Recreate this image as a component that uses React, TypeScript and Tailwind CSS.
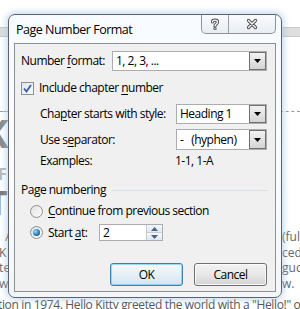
import React from 'react';

const font = { fontFamily: '"Open Sans", "Noto Sans", sans-serif' };

const Ul: React.FC<{ children: React.ReactNode }> = ({ children }) => (
  <span className="underline underline-offset-2">{children}</span>
);

const DropButton = () => (
  <div className="h-full w-[17px] border border-[#707070] bg-gradient-to-b from-[#f2f2f2] to-[#d4d4d4] flex items-center justify-center">
    <svg width="7" height="4" viewBox="0 0 7 4">
      <path d="M0 0h7L3.5 4z" fill="#000" />
    </svg>
  </div>
);

const Select: React.FC<{ value: string; className: string }> = ({ value, className }) => (
  <div className={`flex items-stretch border border-[#abadb3] bg-white ${className}`}>
    <div className="flex-1 pl-[3px] flex items-center whitespace-pre text-black">{value}</div>
    <DropButton />
  </div>
);

const CaptionGlyph: React.FC<{ d: string }> = ({ d }) => (
  <svg width="14" height="12" viewBox="0 0 14 12">
    <path d={d} fill="none" stroke="#4b4b4b" strokeWidth="3.2" strokeLinecap="round" strokeLinejoin="round" />
    <path d={d} fill="none" stroke="#ffffff" strokeWidth="1.4" strokeLinecap="round" strokeLinejoin="round" />
  </svg>
);

const Radio: React.FC<{ checked?: boolean }> = ({ checked }) => (
  <div className="w-[13px] h-[13px] rounded-full border border-[#8e8f8f] bg-gradient-to-br from-[#e4e4e4] to-[#fbfbfb] flex items-center justify-center">
    {checked && (
      <div className="w-[7px] h-[7px] rounded-full bg-[radial-gradient(circle_at_35%_35%,#9bdcff,#1a73b5_60%,#0b4b86)]" />
    )}
  </div>
);

export default function App() {
  return (
    <div className="relative w-[300px] h-[309px] overflow-hidden bg-white" style={font}>
      {/* document behind */}
      <div className="h-[27px]" />
      <div className="h-[10px] bg-[#dedede] border-y border-[#c9c9c9]" />
      <div className="h-[74px]" />
      <div className="flex justify-between h-[2px]">
        <div className="w-[10px] border-t border-dashed border-[#9a9a9a]" />
        <div className="w-[20px] border-t border-dashed border-[#9a9a9a]" />
      </div>
      <div className="h-[40px] text-[40px] font-bold leading-[40px] text-[#8a8a8a] ml-[-18px]">K</div>
      <div className="h-[18px] mt-[12px] text-[16px] font-bold leading-[18px] text-[#b8b8b8] ml-[-2px]">F</div>
      <div className="h-[30px] mt-[4px] text-[34px] font-bold leading-[30px] text-[#7a7a7a] ml-[-12px]">T</div>
      <div className="flex justify-between text-[12px] leading-[15.5px] text-[#666] whitespace-nowrap mt-[12px]">
        <div className="flex flex-col ml-[-4px]">
          <span className="text-[#c0392b]">&nbsp;&nbsp;&nbsp;A</span>
          <span>&nbsp;K</span>
          <span>&nbsp;te</span>
          <span>&nbsp;w</span>
        </div>
        <div className="flex flex-col w-[18px] overflow-hidden">
          <span>(ful</span>
          <span>ced</span>
          <span>guch</span>
          <span>w.</span>
        </div>
      </div>
      <div className="absolute left-[-2px] top-[296px] whitespace-nowrap text-[12px] tracking-[-0.35px] text-[#555]">
        tion in 1974. Hello Kitty greeted the world with a "Hello!" on l
      </div>

      {/* dialog window */}
      <div className="absolute left-[8px] top-[14px] w-[274px] h-[284px] rounded-[7px] border border-[#5f6368] bg-gradient-to-b from-[#f7fbff] via-[#fbfcfd] to-[#f3f6f9] shadow-[0_0_6px_2px_rgba(150,190,230,0.55)] flex flex-col tracking-[-0.5px] whitespace-nowrap">
        <div className="h-[28px] flex items-start justify-between">
          <div className="pl-[7px] pt-[7px] text-[12.5px] text-black leading-[16px]">Page Number Format</div>
          <div className="mr-[5px] flex h-[19px] border border-t-0 border-[#8d9399] rounded-b-[5px] bg-gradient-to-b from-[#f9fbfd] to-[#e9eef3]">
            <div className="w-[27px] flex items-center justify-center border-r border-[#9aa0a6]">
              <CaptionGlyph d="M4.5 4C4.5 1.5 9.5 1.5 9.5 4C9.5 6 7 6 7 8M7 10.6v0.1" />
            </div>
            <div className="w-[46px] flex items-center justify-center">
              <CaptionGlyph d="M3.5 2.5L10.5 9.5M10.5 2.5L3.5 9.5" />
            </div>
          </div>
        </div>

        {/* client */}
        <div className="mx-[5px] flex-1 mb-[5px] border border-[#8e9194] bg-[#f0f0f0] text-[12px] leading-[14px] text-black pl-[6px] pr-[8px] pt-[7px]">
          <div className="flex items-center justify-between h-[20px]">
            <span>Number <Ul>f</Ul>ormat:</span>
            <Select value="1, 2, 3, ..." className="w-[155px] h-[20px]" />
          </div>

          <div className="flex items-center gap-[5px] h-[14px] mt-[10px]">
            <div className="w-[13px] h-[13px] border border-[#8e8f8f] bg-gradient-to-br from-[#dfe6ee] to-[#f8fafc] flex items-center justify-center">
              <svg width="9" height="9" viewBox="0 0 9 9">
                <path d="M1 4.5L3.5 7.5L8 1" fill="none" stroke="#3b5a9a" strokeWidth="1.8" />
              </svg>
            </div>
            <span>Include chapter <Ul>n</Ul>umber</span>
          </div>

          <div className="pl-[19px]">
            <div className="flex items-center justify-between h-[20px] mt-[9px]">
              <span>Cha<Ul>p</Ul>ter starts with style:</span>
              <Select value="Heading 1" className="w-[91px] h-[20px]" />
            </div>
            <div className="flex items-center justify-between h-[21px] mt-[5px]">
              <span>Use s<Ul>e</Ul>parator:</span>
              <Select value="-   (hyphen)" className="w-[91px] h-[21px]" />
            </div>
            <div className="flex items-center h-[14px] mt-[4px]">
              <span className="w-[135px]">Examples:</span>
              <span>1-1, 1-A</span>
            </div>
          </div>

          <div className="flex items-center h-[14px] mt-[15px]">
            <span>Page numbering</span>
            <div className="flex-1 ml-[6px] mr-[-1px] h-px bg-[#d5dfe5]" />
          </div>

          <div className="pl-[9px]">
            <div className="flex items-center gap-[5px] h-[14px] mt-[7px]">
              <Radio />
              <span><Ul>C</Ul>ontinue from previous section</span>
            </div>
            <div className="flex items-center h-[17px] mt-[6px]">
              <Radio checked />
              <span className="ml-[5px] w-[51px]">Start <Ul>a</Ul>t:</span>
              <div className="flex w-[64px] h-[17px] border border-[#abadb3] bg-white">
                <div className="flex-1 pl-[3px] flex items-center">2</div>
                <div className="w-[16px] flex flex-col border-l border-[#c8ccd2]">
                  <div className="flex-1 flex items-center justify-center bg-gradient-to-b from-[#f4f8fc] to-[#dfe8f1] border-b border-[#c8ccd2]">
                    <svg width="7" height="4" viewBox="0 0 7 4"><path d="M0 4h7L3.5 0z" fill="#4d6185" /></svg>
                  </div>
                  <div className="flex-1 flex items-center justify-center bg-gradient-to-b from-[#f4f8fc] to-[#dfe8f1]">
                    <svg width="7" height="4" viewBox="0 0 7 4"><path d="M0 0h7L3.5 4z" fill="#4d6185" /></svg>
                  </div>
                </div>
              </div>
            </div>
          </div>

          <div className="flex justify-end gap-[11px] mt-[22px]">
            <button className="w-[73px] h-[23px] rounded-[3px] border border-[#3c7fb1] bg-gradient-to-b from-[#f4f9fd] via-[#e6f0f8] to-[#d5e4ef] shadow-[inset_0_0_0_1px_rgba(120,200,245,0.7)] text-[12px] text-black">
              OK
            </button>
            <button className="w-[73px] h-[23px] rounded-[3px] border border-[#707070] bg-gradient-to-b from-[#f2f2f2] via-[#e8e8e8] to-[#d3d3d3] shadow-[inset_0_0_0_1px_rgba(255,255,255,0.8)] text-[12px] text-black">
              Cancel
            </button>
          </div>
        </div>
      </div>
    </div>
  );
}
